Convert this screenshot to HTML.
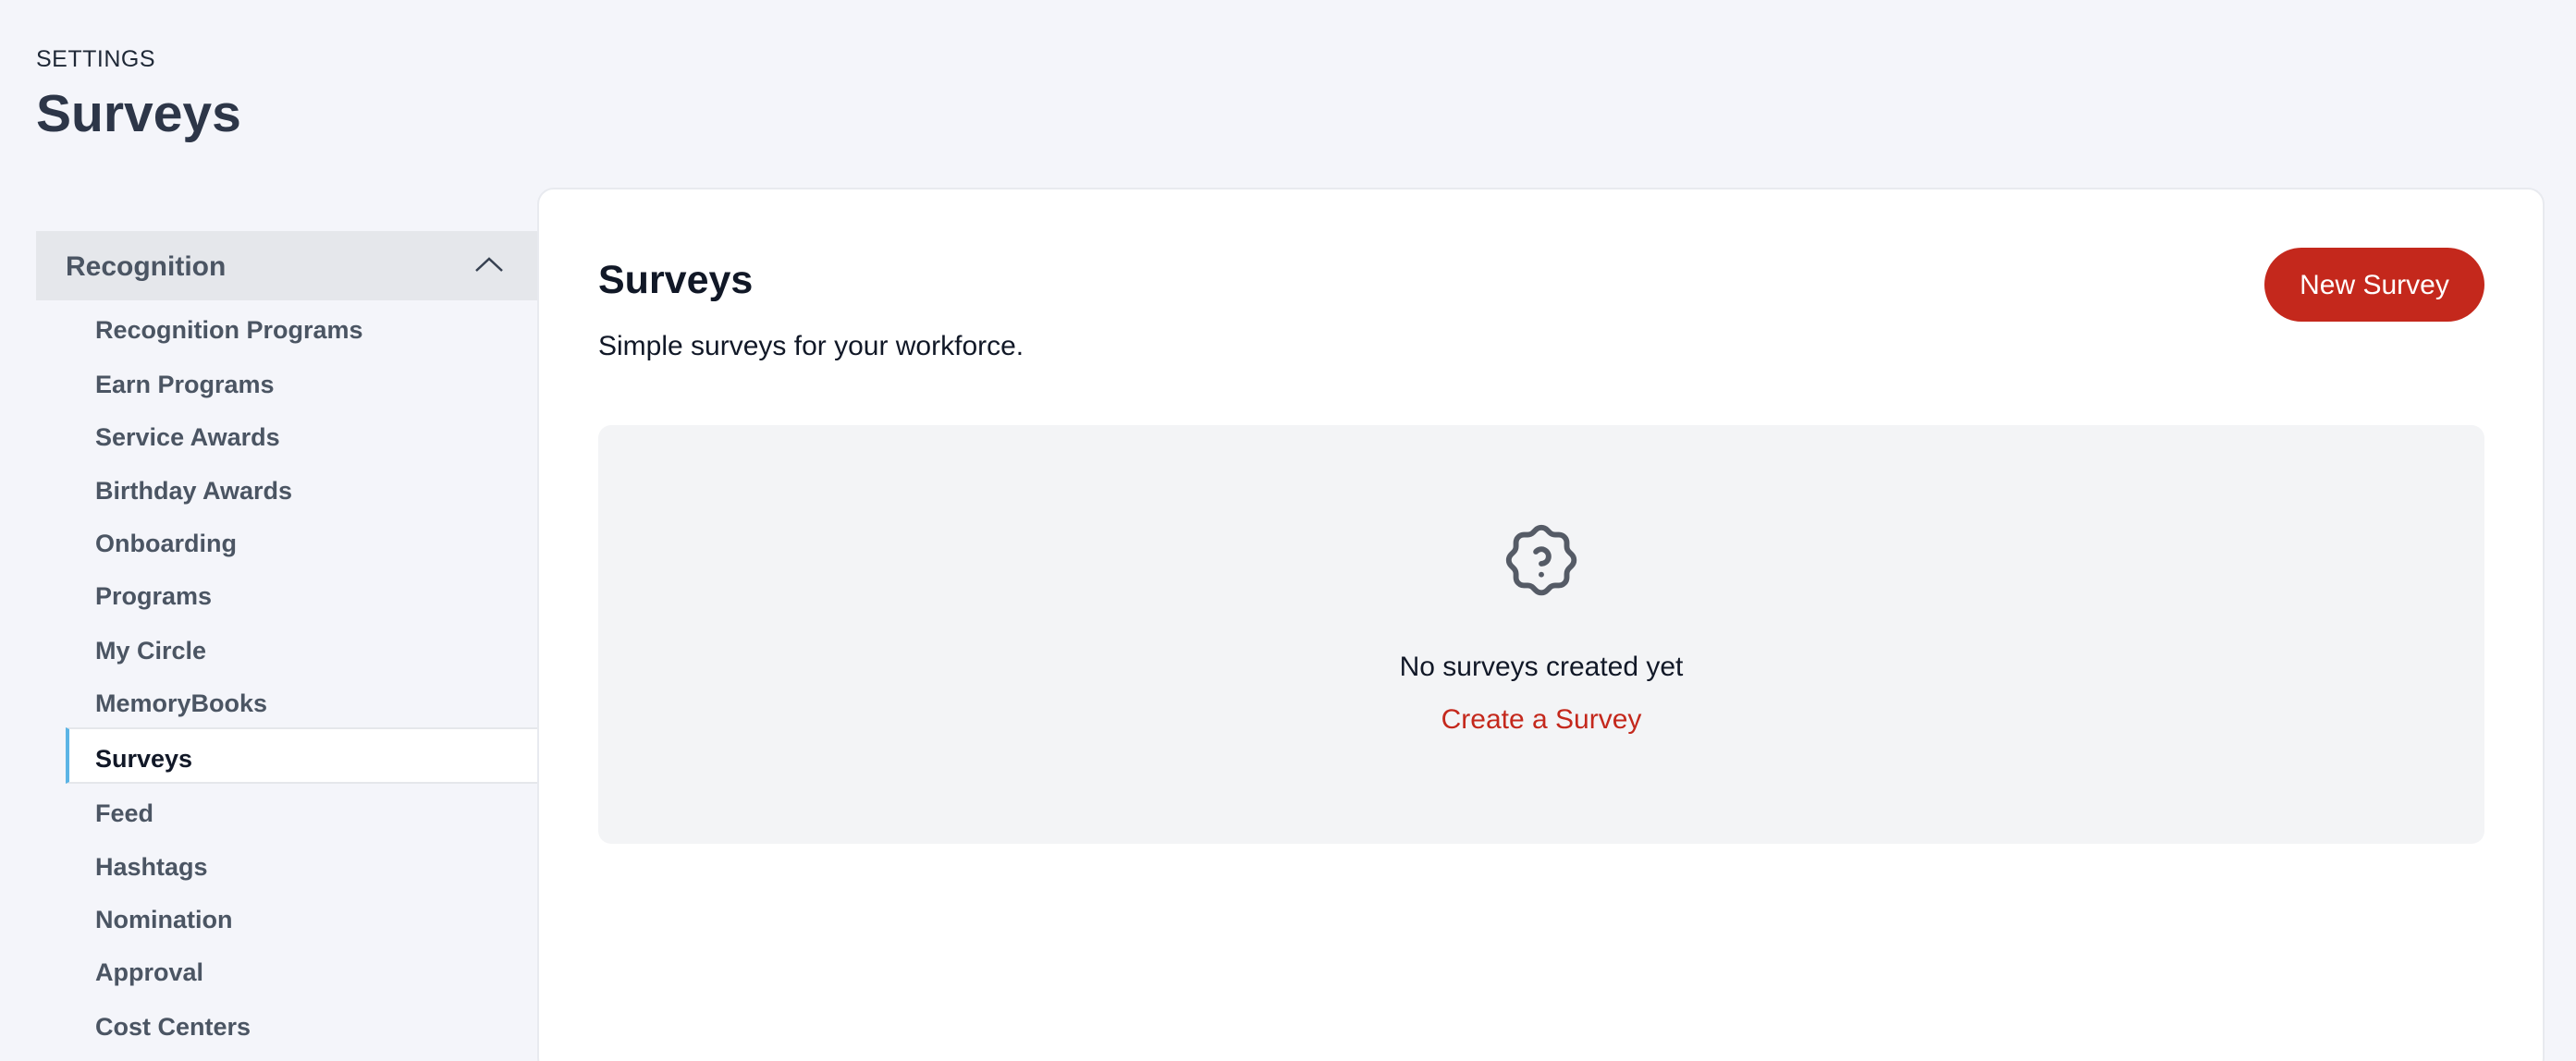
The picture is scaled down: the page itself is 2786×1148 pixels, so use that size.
<!DOCTYPE html>
<html style="overflow:hidden;width:2786px;height:1148px"><head><meta charset="utf-8"><style>
*{box-sizing:border-box;margin:0;padding:0}
body{width:2786px;height:1148px;overflow:hidden;background:#f4f5fa;font-family:"Liberation Sans",sans-serif;position:relative}
.abs{position:absolute;white-space:nowrap}
.settings{left:39px;top:50px;font-size:25px;color:#1f2937;letter-spacing:0.5px}
.title{left:39px;top:90px;font-size:57px;font-weight:bold;color:#2d3648}
.sbh{left:39px;top:250px;width:542px;height:75px;background:#e5e7eb}
.sbh span{position:absolute;left:32px;top:22px;font-size:30px;font-weight:bold;color:#4b5563}
.item{left:103px;font-size:27px;font-weight:bold;color:#4b5563;line-height:32px}
.active{left:71px;top:787px;width:510px;height:61px;background:#fff;border-top:2px solid #e5e7eb;border-bottom:2px solid #e5e7eb;border-left:4px solid #5bb4e5}
.card{left:581px;top:203px;width:2171px;height:960px;background:#fff;border:2px solid #e8eaef;border-radius:18px}
.h2{left:647px;top:279px;font-size:43px;font-weight:bold;color:#111827}
.sub{left:647px;top:358px;font-size:30px;color:#111827}
.btn{left:2449px;top:268px;width:238px;height:80px;border-radius:40px;background:#c4281c;color:#fff;font-size:30px;text-align:center;line-height:82px}
.empty{left:647px;top:460px;width:2040px;height:453px;background:#f3f4f6;border-radius:14px}
.c{left:647px;width:2040px;text-align:center;font-size:30px}
</style></head><body>
<div class="abs settings">SETTINGS</div>
<div class="abs title">Surveys</div>
<div class="abs sbh"><span>Recognition</span>
<svg style="position:absolute;left:474px;top:26px" width="32" height="20" viewBox="0 0 32 20"><path d="M2 17 L16 4 L30 17" fill="none" stroke="#374151" stroke-width="2.5"/></svg></div>
<div class="abs active"></div>
<div class="abs item" style="top:341px">Recognition Programs</div>
<div class="abs item" style="top:400px">Earn Programs</div>
<div class="abs item" style="top:457px">Service Awards</div>
<div class="abs item" style="top:515px">Birthday Awards</div>
<div class="abs item" style="top:572px">Onboarding</div>
<div class="abs item" style="top:629px">Programs</div>
<div class="abs item" style="top:688px">My Circle</div>
<div class="abs item" style="top:745px">MemoryBooks</div>
<div class="abs item" style="top:805px;color:#111827">Surveys</div>
<div class="abs item" style="top:864px">Feed</div>
<div class="abs item" style="top:922px">Hashtags</div>
<div class="abs item" style="top:979px">Nomination</div>
<div class="abs item" style="top:1036px">Approval</div>
<div class="abs item" style="top:1095px">Cost Centers</div>
<div class="abs card"></div>
<div class="abs h2">Surveys</div>
<div class="abs sub">Simple surveys for your workforce.</div>
<div class="abs btn">New Survey</div>
<div class="abs empty"></div>
<svg class="abs" style="left:1620px;top:559px" width="94" height="94" viewBox="0 0 24 24" fill="none" stroke="#555b66" stroke-width="1.5" stroke-linecap="round" stroke-linejoin="round"><path d="M5 7.2a2.2 2.2 0 0 1 2.2 -2.2h1a2.2 2.2 0 0 0 1.55 -.64l.7 -.7a2.2 2.2 0 0 1 3.12 0l.7 .7c.412 .41 .97 .64 1.550 .64h1a2.2 2.2 0 0 1 2.2 2.2v1c0 .58 .23 1.138 .64 1.55l.7 .7a2.2 2.2 0 0 1 0 3.12l-.7 .7a2.2 2.2 0 0 0 -.64 1.55v1a2.2 2.2 0 0 1 -2.2 2.2h-1a2.2 2.2 0 0 0 -1.55 .64l-.7 .7a2.2 2.2 0 0 1 -3.12 0l-.7 -.7a2.2 2.2 0 0 0 -1.55 -.64h-1a2.2 2.2 0 0 1 -2.2 -2.2v-1a2.2 2.2 0 0 0 -.64 -1.55l-.7 -.7a2.2 2.2 0 0 1 0 -3.12l.7 -.7a2.2 2.2 0 0 0 .64 -1.55v-1"/><path d="M12 16v.01"/><path d="M12 13a2 2 0 0 0 .914 -3.782a1.98 1.98 0 0 0 -2.414 .483"/></svg>
<div class="abs c" style="top:705px;color:#111827">No surveys created yet</div>
<div class="abs c" style="top:762px;color:#c4281c">Create a Survey</div>
</body></html>
